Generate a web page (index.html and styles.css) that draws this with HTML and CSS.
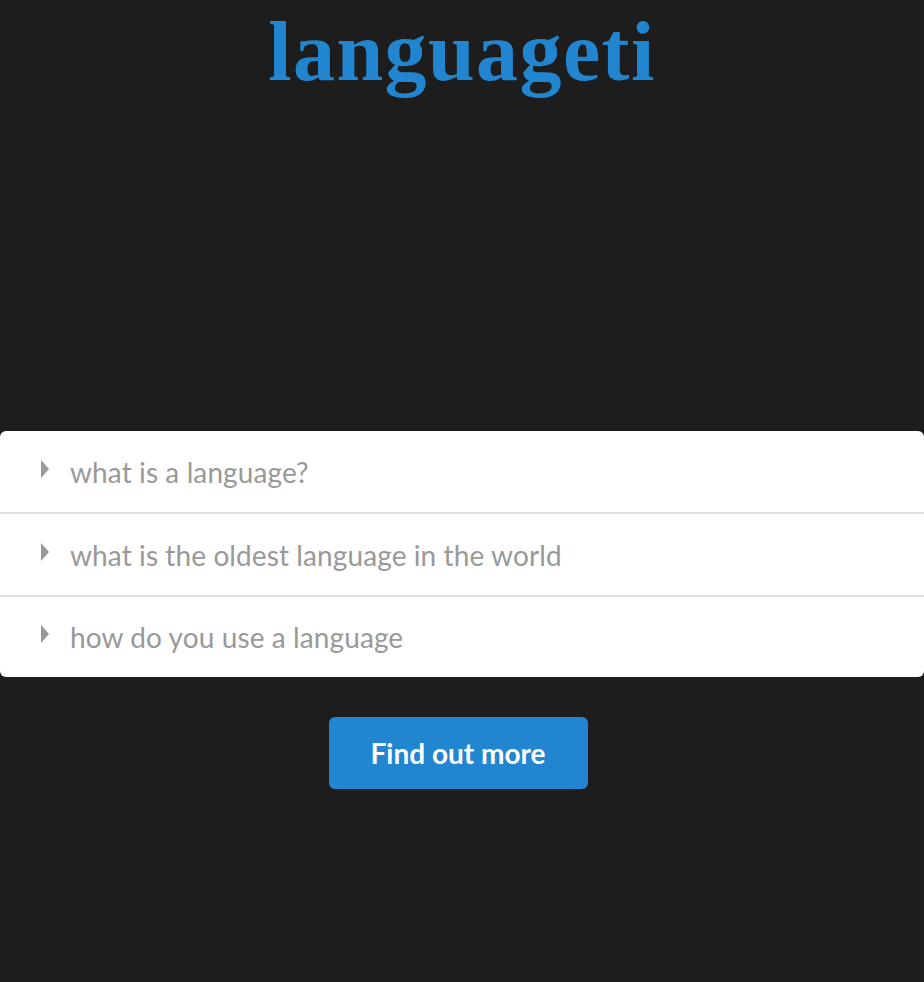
FILE: index.html
```html
<!DOCTYPE html>
<html>
<head>
<meta charset="utf-8">
<link rel="stylesheet" href="styles.css">
</head>
<body>
<header class="top">
  <h1 class="logo">languageti</h1>
</header>
<main class="main">
  <div class="accordion">
    <div class="item">
      <svg class="caret" width="10" height="18" viewBox="0 0 10 18"><path d="M1 0 L9 9 L1 18 Z" fill="#999"/></svg>
      <span class="q">what is a language?</span>
    </div>
    <div class="item">
      <svg class="caret" width="10" height="18" viewBox="0 0 10 18"><path d="M1 0 L9 9 L1 18 Z" fill="#999"/></svg>
      <span class="q">what is the oldest language in the world</span>
    </div>
    <div class="item last">
      <svg class="caret" width="10" height="18" viewBox="0 0 10 18"><path d="M1 0 L9 9 L1 18 Z" fill="#999"/></svg>
      <span class="q">how do you use a language</span>
    </div>
  </div>
  <div class="actions">
    <button class="btn">Find out more</button>
  </div>
</main>
</body>
</html>
```

FILE: styles.css
```css
html, body {
  margin: 0;
  padding: 0;
  background: #1d1d1d;
  height: 100%;
}
body {
  font-family: Lato, "Open Sans", sans-serif;
}
.top {
  display: flex;
  justify-content: center;
  padding-top: 4px;
}
.logo {
  margin: 0;
  font-family: "Liberation Serif", serif;
  font-weight: bold;
  font-size: 84px;
  letter-spacing: 1.4px;
  line-height: 96px;
  color: #2185d0;
}
.main {
  margin-top: 331px;
}
.accordion {
  background: #fff;
  border-radius: 6px;
  display: flex;
  flex-direction: column;
}
.item {
  height: 81px;
  display: flex;
  align-items: center;
  padding-left: 40px;
  gap: 20px;
  border-top: 2px solid #dedede;
}
.item:first-child {
  border-top: none;
}
.item.last {
  height: 80px;
}
.caret {
  flex: none;
  margin-top: -6px;
}
.q {
  font-size: 28px;
  letter-spacing: 0.1px;
  color: #999;
  font-weight: 400;
}
.actions {
  display: flex;
  justify-content: center;
  margin-top: 40px;
  padding-right: 8px;
}
.btn {
  width: 259px;
  height: 72px;
  border: none;
  border-radius: 6px;
  background: #2185d0;
  color: #fff;
  font-family: Lato, sans-serif;
  font-weight: bold;
  font-size: 28px;
  padding: 0;
}
```
